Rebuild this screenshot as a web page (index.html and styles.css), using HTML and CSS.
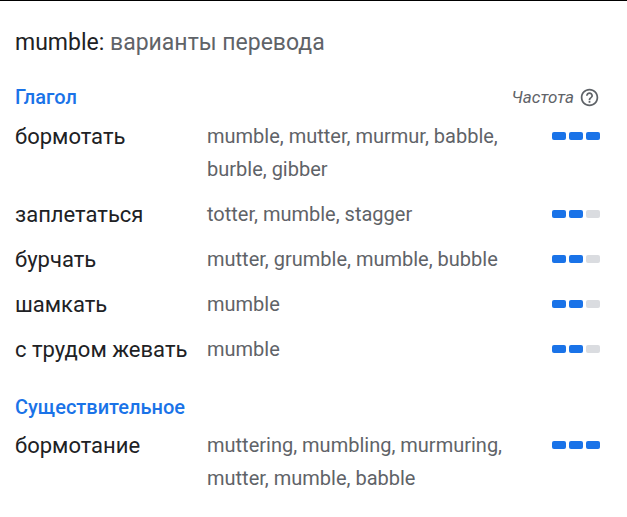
FILE: index.html
```html
<!DOCTYPE html>
<html lang="ru">
<head>
    <meta charset="UTF-8">
    <title>mumble: варианты перевода</title>
    <link rel="stylesheet" href="styles.css">
</head>
<body>
    <div class="card">
        <h2 class="title"><span class="word">mumble:</span> варианты перевода</h2>

        <div class="pos-head">
            <span class="pos">Глагол</span>
            <span class="freq-label">Частота
                <svg class="help" viewBox="0 0 24 24" width="21" height="21"><path d="M11 18h2v-2h-2v2zm1-16C6.48 2 2 6.48 2 12s4.480 10 10 10 10-4.48 10-10S17.52 2 12 2zm0 18c-4.41 0-8-3.59-8-8s3.59-8 8-8 8 3.59 8 8-3.590 8-8 8zm0-14c-2.21 0-4 1.79-4 4h2c0-1.1.9-2 2-2s2 .9 2 2c0 2-3 1.75-3 5h2c0-2.25 3-2.5 3-5 0-2.210-1.79-4-4-4z"/></svg>
            </span>
        </div>
        <div class="row">
            <div class="term">бормотать</div>
            <div class="trans">mumble, mutter, murmur, babble, burble, gibber</div>
            <div class="bars"><i class="on"></i><i class="on"></i><i class="on"></i></div>
        </div>
        <div class="row">
            <div class="term">заплетаться</div>
            <div class="trans">totter, mumble, stagger</div>
            <div class="bars"><i class="on"></i><i class="on"></i><i></i></div>
        </div>
        <div class="row">
            <div class="term">бурчать</div>
            <div class="trans">mutter, grumble, mumble, bubble</div>
            <div class="bars"><i class="on"></i><i class="on"></i><i></i></div>
        </div>
        <div class="row">
            <div class="term">шамкать</div>
            <div class="trans">mumble</div>
            <div class="bars"><i class="on"></i><i class="on"></i><i></i></div>
        </div>
        <div class="row">
            <div class="term">с трудом жевать</div>
            <div class="trans">mumble</div>
            <div class="bars"><i class="on"></i><i class="on"></i><i></i></div>
        </div>

        <div class="pos-head second">
            <span class="pos">Существительное</span>
        </div>
        <div class="row">
            <div class="term">бормотание</div>
            <div class="trans">muttering, mumbling, murmuring, mutter, mumble, babble</div>
            <div class="bars"><i class="on"></i><i class="on"></i><i class="on"></i></div>
        </div>
    </div>
</body>
</html>
```

FILE: styles.css
```css
body {
    margin: 0;
    font-family: Roboto, "Noto Sans", Arial, sans-serif;
    background: #fff;
    color: #202124;
    border-top: 1px solid #000;
}
.card {
    padding: 20px 27px 20px 15px;
}
.title {
    margin: 0 0 18px;
    font-size: 23px;
    font-weight: 400;
    color: #5f6368;
    line-height: 44px;
}
.title .word {
    color: #202124;
}
.pos-head {
    display: flex;
    justify-content: space-between;
    align-items: center;
    height: 28px;
    margin-bottom: 3px;
}
.pos-head.second {
    margin-top: 21px;
    margin-bottom: 2px;
}
.pos {
    color: #1a73e8;
    font-size: 20px;
    font-weight: 500;
}
.freq-label {
    display: flex;
    align-items: center;
    gap: 5px;
    font-size: 17px;
    font-style: italic;
    color: #5f6368;
}
.help {
    fill: #5f6368;
}
.row {
    display: flex;
    align-items: flex-start;
    padding: 6px 0;
}
.term {
    width: 192px;
    flex: none;
    font-size: 22px;
    line-height: 33px;
}
.trans {
    flex: 1;
    font-size: 20px;
    line-height: 33px;
    color: #5f6368;
    padding-right: 40px;
}
.bars {
    display: flex;
    gap: 3px;
    padding-top: 12px;
}
.bars i {
    width: 14px;
    height: 8px;
    border-radius: 2px;
    background: #dadce0;
}
.bars i.on {
    background: #1a73e8;
}
```
